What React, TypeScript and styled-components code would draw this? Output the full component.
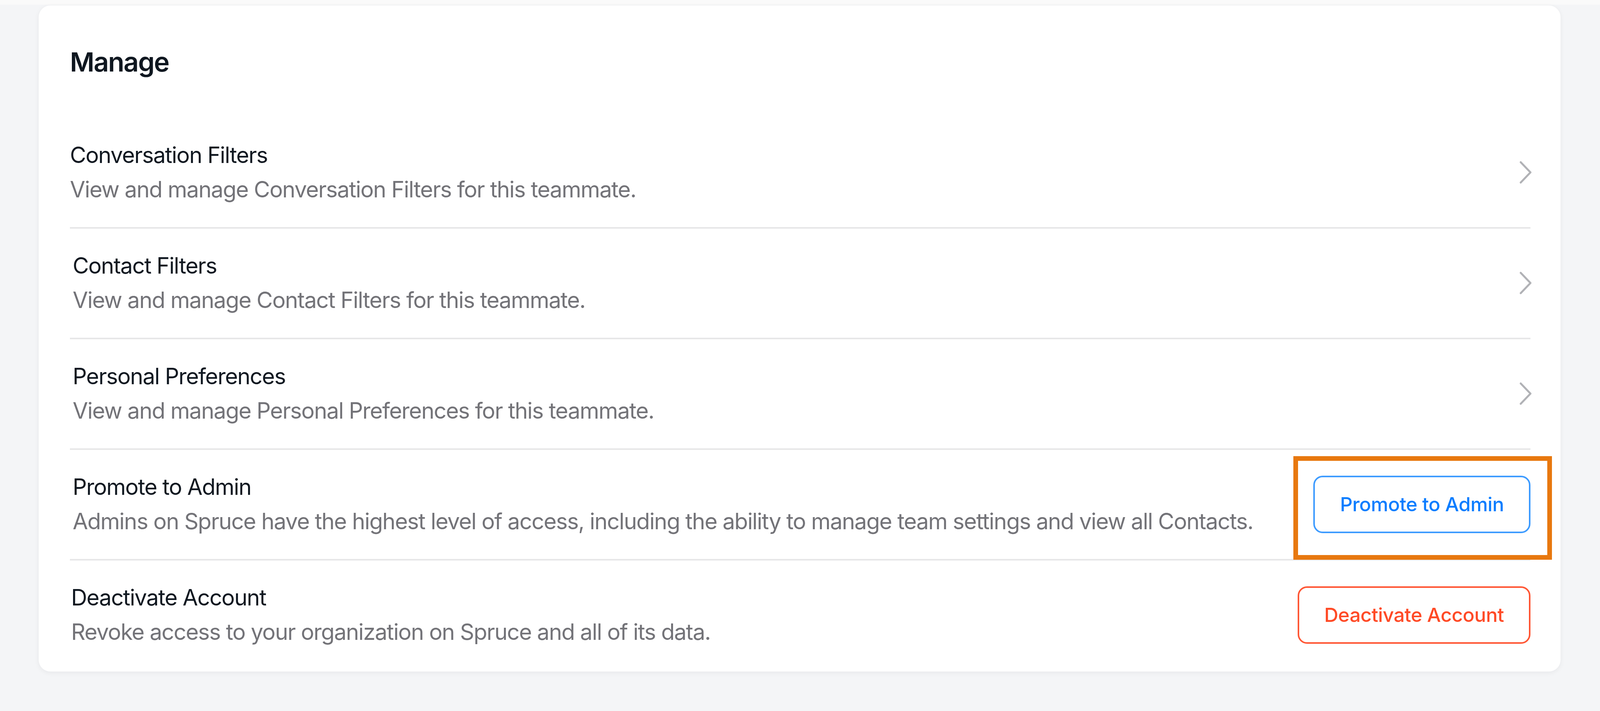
import styled, { createGlobalStyle } from "styled-components";

const GlobalStyle = createGlobalStyle`
  html, body {
    margin: 0;
    padding: 0;
    background: #f4f5f7;
    font-family: Inter, "Noto Sans", "Liberation Sans", sans-serif;
    -webkit-font-smoothing: antialiased;
    overflow: hidden;
  }
  * {
    box-sizing: border-box;
  }
`;

type Item = {
  title: string;
  desc: string;
  inset: number;
  action: "chevron" | "promote" | "deactivate";
};

const items: Item[] = [
  {
    title: "Conversation Filters",
    desc: "View and manage Conversation Filters for this teammate.",
    inset: 0,
    action: "chevron",
  },
  {
    title: "Contact Filters",
    desc: "View and manage Contact Filters for this teammate.",
    inset: 7,
    action: "chevron",
  },
  {
    title: "Personal Preferences",
    desc: "View and manage Personal Preferences for this teammate.",
    inset: 7,
    action: "chevron",
  },
  {
    title: "Promote to Admin",
    desc: "Admins on Spruce have the highest level of access, including the ability to manage team settings and view all Contacts.",
    inset: 7,
    action: "promote",
  },
  {
    title: "Deactivate Account",
    desc: "Revoke access to your organization on Spruce and all of its data.",
    inset: 3,
    action: "deactivate",
  },
];

const Chevron = () => (
  <ChevronIcon width="34" height="58" viewBox="0 0 34 58" fill="none">
    <path
      d="M6 3 L31 29 L6 55"
      stroke="#b1b2b6"
      strokeWidth="5"
      strokeLinecap="round"
      strokeLinejoin="round"
    />
  </ChevronIcon>
);

const App = () => {
  return (
    <>
      <GlobalStyle />
      <TopEdge />
      <Page>
        <Card>
          <Heading>Manage</Heading>
          <List>
            {items.map((item) => (
              <Row key={item.title}>
                <RowText inset={item.inset}>
                  <Title>{item.title}</Title>
                  <Desc>{item.desc}</Desc>
                </RowText>
                {item.action === "chevron" && <Chevron />}
                {item.action === "promote" && (
                  <ButtonWrap>
                    <OutlineButton tone="blue">Promote to Admin</OutlineButton>
                    <Highlight />
                  </ButtonWrap>
                )}
                {item.action === "deactivate" && (
                  <ButtonWrap>
                    <OutlineButton tone="red">Deactivate Account</OutlineButton>
                  </ButtonWrap>
                )}
              </Row>
            ))}
          </List>
        </Card>
      </Page>
    </>
  );
};

export default App;

const TopEdge = styled.div`
  height: 12px;
  background: #fafafa;
`;

const Page = styled.div`
  padding: 2px 101px 40px 99px;
`;

const Card = styled.div`
  background: #ffffff;
  border-radius: 30px;
  box-shadow: 0 3px 14px rgba(20, 24, 40, 0.06);
  padding: 102px 77px 0 80px;
`;

const Heading = styled.h2`
  margin: 0;
  font-size: 68px;
  line-height: 84px;
  font-weight: 600;
  color: #0f1720;
  letter-spacing: -2px;
`;

const List = styled.div`
  display: flex;
  flex-direction: column;
  margin-top: 102px;
`;

const Row = styled.div`
  display: flex;
  align-items: center;
  justify-content: space-between;
  padding: 51px 0 52px;
  border-bottom: 4px solid #e7e7e8;

  &:last-child {
    border-bottom: none;
    padding-bottom: 57px;
  }
`;

const RowText = styled.div<{ inset: number }>`
  display: flex;
  flex-direction: column;
  padding-left: ${({ inset }) => inset}px;
  min-width: 0;
`;

const Title = styled.div`
  font-size: 57px;
  line-height: 88px;
  font-weight: 400;
  letter-spacing: -1.6px;
  color: #0f1720;
  white-space: nowrap;
`;

const Desc = styled.div`
  font-size: 57px;
  line-height: 88px;
  font-weight: 400;
  letter-spacing: -1.6px;
  color: #737378;
  white-space: nowrap;
`;

const ChevronIcon = styled.svg`
  flex-shrink: 0;
  margin-right: -3px;
`;

const ButtonWrap = styled.div`
  position: relative;
  flex-shrink: 0;
`;

const OutlineButton = styled.button<{ tone: "blue" | "red" }>`
  height: 147px;
  padding: 0 64px;
  border-radius: 24px;
  background: #ffffff;
  font-family: Inter, "Noto Sans", "Liberation Sans", sans-serif;
  font-size: 50px;
  font-weight: 500;
  letter-spacing: -0.5px;
  cursor: pointer;
  border: 4px solid ${({ tone }) => (tone === "blue" ? "#3d9bff" : "#ff5634")};
  color: ${({ tone }) => (tone === "blue" ? "#0a7dff" : "#ff4a26")};
`;

const Highlight = styled.div`
  position: absolute;
  left: -51px;
  top: -50px;
  right: -55px;
  bottom: -68px;
  border: 12px solid #e8780f;
  pointer-events: none;
`;
